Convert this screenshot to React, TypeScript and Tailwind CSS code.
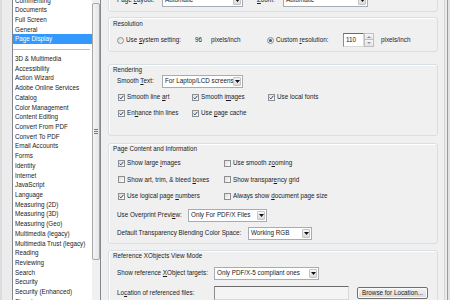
import React from "react";

const topItems = ["Commenting", "Documents", "Full Screen", "General", "Page Display"];
const restItems = [
  "3D & Multimedia",
  "Accessibility",
  "Action Wizard",
  "Adobe Online Services",
  "Catalog",
  "Color Management",
  "Content Editing",
  "Convert From PDF",
  "Convert To PDF",
  "Email Accounts",
  "Forms",
  "Identity",
  "Internet",
  "JavaScript",
  "Language",
  "Measuring (2D)",
  "Measuring (3D)",
  "Measuring (Geo)",
  "Multimedia (legacy)",
  "Multimedia Trust (legacy)",
  "Reading",
  "Reviewing",
  "Search",
  "Security",
  "Security (Enhanced)",
  "Signatures",
  "Spelling",
];

const Check = ({ on }: { on?: boolean }) => (
  <span className="flex h-[7px] w-[7px] shrink-0 items-center justify-center border border-[#8e8f8f] bg-linear-to-br from-[#dedede] to-[#fbfbfb]">
    {on && (
      <svg width="5" height="5" viewBox="0 0 5 5">
        <path d="M0.6 2.6 L1.9 3.9 L4.4 0.8" stroke="#2c4677" strokeWidth="1" fill="none" />
      </svg>
    )}
  </span>
);

const Radio = ({ on }: { on?: boolean }) => (
  <span className="flex h-[7px] w-[7px] shrink-0 items-center justify-center rounded-full border border-[#8e8f8f] bg-linear-to-br from-[#d8d8d8] to-[#fbfbfb]">
    {on && <span className="h-[3px] w-[3px] rounded-full bg-[#2160a8]" />}
  </span>
);

const Select = ({ w, text }: { w: string; text: string }) => (
  <div className={"flex h-[13px] shrink-0 items-stretch border border-[#a5acb5] bg-white " + w}>
    <span className="flex flex-1 items-center overflow-hidden whitespace-nowrap pl-[2px]">{text}</span>
    <span className="my-[1px] mr-[1px] flex w-[8px] shrink-0 items-center justify-center rounded-[1px] border border-[#c4c4c4] bg-linear-to-b from-[#f6f6f6] to-[#dcdcdc]">
      <svg width="5" height="3" viewBox="0 0 5 3">
        <path d="M0 0 H5 L2.5 3 Z" fill="#111" />
      </svg>
    </span>
  </div>
);

const CheckItem = ({ on, w, children }: { on?: boolean; w: string; children: React.ReactNode }) => (
  <div className={"flex shrink-0 items-center gap-[2px] " + w}>
    <Check on={on} />
    <span className="whitespace-nowrap">{children}</span>
  </div>
);

const Group = ({ h, mt, children }: { h: string; mt: string; children: React.ReactNode }) => (
  <div className={"flex shrink-0 flex-col rounded-[3px] border border-[#d5dfe5] shadow-[inset_1px_1px_0_#ffffff] " + h + " " + mt}>
    {children}
  </div>
);

const App = () => {
  return (
    <div className="flex h-[300px] w-[450px] overflow-hidden bg-[#f0f0f0] font-['Liberation_Sans',Arial,sans-serif] text-[6.3px] leading-none text-[#1b1b1b]">
      {/* left edge of the dialog */}
      <div className="h-full w-[12px] shrink-0 border-l-[2px] border-[#dcdcdc] bg-[#ececec]" />

      {/* category list */}
      <div className="flex h-full w-[89px] shrink-0 border-x border-[#828790] bg-white">
        <div className="w-[79px] overflow-hidden">
          <div className="-mt-[4.4px]">
            {topItems.map((item) => (
              <div
                key={item}
                className={
                  "h-[9.73px] whitespace-nowrap pl-[2px] leading-[9.73px] " +
                  (item === "Page Display" ? "bg-[#3399ff] text-white" : "")
                }
              >
                {item}
              </div>
            ))}
            <div className="flex h-[9.73px] items-center pr-[2px]">
              <div className="h-px w-full bg-[#a9c6e6]" />
            </div>
            {restItems.map((item) => (
              <div key={item} className="h-[9.73px] whitespace-nowrap pl-[2px] leading-[9.73px]">
                {item}
              </div>
            ))}
          </div>
        </div>
        <div className="flex w-[8px] flex-col bg-[#f0f0f0]">
          <div className="mt-[3px] flex h-[257px] flex-col items-center justify-center rounded-[2px] border border-[#a8a8a8] bg-linear-to-r from-[#f4f4f4] to-[#e6e6e6]">
            <div className="h-px w-[4px] bg-[#7a7a7a]" />
            <div className="mt-px h-px w-[4px] bg-[#7a7a7a]" />
            <div className="mt-px h-px w-[4px] bg-[#7a7a7a]" />
          </div>
        </div>
      </div>

      <div className="w-[7px] shrink-0" />

      {/* settings */}
      <div className="-mt-[12px] flex w-[330px] shrink-0 flex-col">
        <Group h="h-[24px]" mt="mt-0">
          <div className="flex h-full items-center pl-[8px]">
            <span className="w-[45px] shrink-0 whitespace-nowrap">
              Page <u>L</u>ayout:
            </span>
            <Select w="w-[81px]" text="Automatic" />
            <span className="w-[14px] shrink-0" />
            <span className="w-[26px] shrink-0">
              <u>Z</u>oom:
            </span>
            <Select w="w-[85px]" text="Automatic" />
          </div>
        </Group>

        <Group h="h-[35px]" mt="mt-[5px]">
          <div className="flex h-[12px] items-center pl-[4px]">Resolution</div>
          <div className="flex h-[20px] items-center pl-[8px]">
            <div className="flex w-[78px] shrink-0 items-center gap-[2px]">
              <Radio />
              <span className="whitespace-nowrap">
                Use <u>s</u>ystem setting:
              </span>
            </div>
            <span className="w-[16px] shrink-0">96</span>
            <span className="w-[56px] shrink-0">pixels/inch</span>
            <div className="flex w-[76px] shrink-0 items-center gap-[2px]">
              <Radio on />
              <span className="whitespace-nowrap">
                Custom <u>r</u>esolution:
              </span>
            </div>
            <div className="flex h-[14px] shrink-0">
              <div className="flex w-[21px] items-center border border-[#d9d9d9] border-t-[#6b6b6b] border-l-[#8c8c8c] bg-white pl-[2px]">
                110
              </div>
              <div className="flex w-[10px] flex-col">
                <span className="flex h-[7px] items-center justify-center border border-[#c0c0c0] bg-linear-to-b from-[#f7f7f7] to-[#e3e3e3]">
                  <svg width="4" height="2" viewBox="0 0 4 2">
                    <path d="M0 2 H4 L2 0 Z" fill="#8596b2" />
                  </svg>
                </span>
                <span className="flex h-[7px] items-center justify-center border border-t-0 border-[#c0c0c0] bg-linear-to-b from-[#f7f7f7] to-[#e3e3e3]">
                  <svg width="4" height="2" viewBox="0 0 4 2">
                    <path d="M0 0 H4 L2 2 Z" fill="#8596b2" />
                  </svg>
                </span>
              </div>
            </div>
            <span className="ml-[7px] whitespace-nowrap">pixels/inch</span>
          </div>
        </Group>

        <Group h="h-[72px]" mt="mt-[12px]">
          <div className="flex h-[11px] items-center pl-[4px]">Rendering</div>
          <div className="flex h-[10px] items-center pl-[8px]">
            <span className="w-[45px] shrink-0 whitespace-nowrap">
              Smooth <u>T</u>ext:
            </span>
            <Select w="w-[81px]" text="For Laptop/LCD screens" />
          </div>
          <div className="mt-[3px] flex h-[16px] items-center pl-[9px]">
            <CheckItem on w="w-[74px]">
              Smooth line <u>a</u>rt
            </CheckItem>
            <CheckItem on w="w-[76px]">
              Smooth i<u>m</u>ages
            </CheckItem>
            <CheckItem on w="w-[80px]">
              Use local fonts
            </CheckItem>
          </div>
          <div className="flex h-[16px] items-center pl-[9px]">
            <CheckItem on w="w-[74px]">
              En<u>h</u>ance thin lines
            </CheckItem>
            <CheckItem on w="w-[76px]">
              Use <u>p</u>age cache
            </CheckItem>
          </div>
        </Group>

        <Group h="h-[101px]" mt="mt-[7px]">
          <div className="flex h-[11px] items-center pl-[4px]">Page Content and Information</div>
          <div className="flex h-[16.5px] items-center pl-[9px]">
            <CheckItem on w="w-[106px]">
              Show large <u>i</u>mages
            </CheckItem>
            <CheckItem w="w-[120px]">
              Use smooth z<u>o</u>oming
            </CheckItem>
          </div>
          <div className="flex h-[16.5px] items-center pl-[9px]">
            <CheckItem w="w-[106px]">
              Show art, trim, &amp; bleed <u>b</u>oxes
            </CheckItem>
            <CheckItem w="w-[120px]">
              Show transpar<u>e</u>ncy grid
            </CheckItem>
          </div>
          <div className="flex h-[16.5px] items-center pl-[9px]">
            <CheckItem on w="w-[106px]">
              Use logical page <u>n</u>umbers
            </CheckItem>
            <CheckItem w="w-[120px]">
              Always show <u>d</u>ocument page size
            </CheckItem>
          </div>
          <div className="flex h-[22px] items-center pl-[8px]">
            <span className="w-[71px] shrink-0 whitespace-nowrap">
              Use Overprint Previ<u>e</u>w:
            </span>
            <Select w="w-[79px]" text="Only For PDF/X Files" />
          </div>
          <div className="flex h-[14px] items-center pl-[8px]">
            <span className="w-[131px] shrink-0 whitespace-nowrap">Default Transparency Blending Color Space:</span>
            <Select w="w-[64px]" text="Working RGB" />
          </div>
        </Group>

        <Group h="h-[70px]" mt="mt-[6px]">
          <div className="flex h-[10px] items-center pl-[4px]">Reference XObjects View Mode</div>
          <div className="flex h-[24px] items-center pl-[8px]">
            <span className="w-[97px] shrink-0 whitespace-nowrap">
              Show reference <u>X</u>Object targets:
            </span>
            <Select w="w-[105px]" text="Only PDF/X-5 compliant ones" />
          </div>
          <div className="flex h-[16px] items-center pl-[8px]">
            <span className="w-[97px] shrink-0 whitespace-nowrap">
              Lo<u>c</u>ation of referenced files:
            </span>
            <div className="h-[14px] w-[135px] shrink-0 border border-[#d9d9d9] border-t-[#6b6b6b] border-l-[#8c8c8c] bg-[#f4f4f4]" />
            <button
              type="button"
              className="ml-[8px] flex h-[12px] w-[71px] shrink-0 items-center justify-center rounded-[2px] border border-[#707070] bg-linear-to-b from-[#f4f4f4] to-[#d9d9d9] shadow-[inset_0_0_0_1px_#fbfbfb]"
            >
              Browse for Location...
            </button>
          </div>
        </Group>
      </div>

      <div className="w-[6px] shrink-0" />

      {/* right scrollbar */}
      <div className="flex h-full w-[6px] shrink-0 border-l border-[#d4d4d4] bg-[#ebebeb]">
        <div className="ml-[2px] h-full flex-1 border-l border-[#9a9a9a] bg-[#e1e1e1]" />
      </div>
    </div>
  );
};

export default App;
